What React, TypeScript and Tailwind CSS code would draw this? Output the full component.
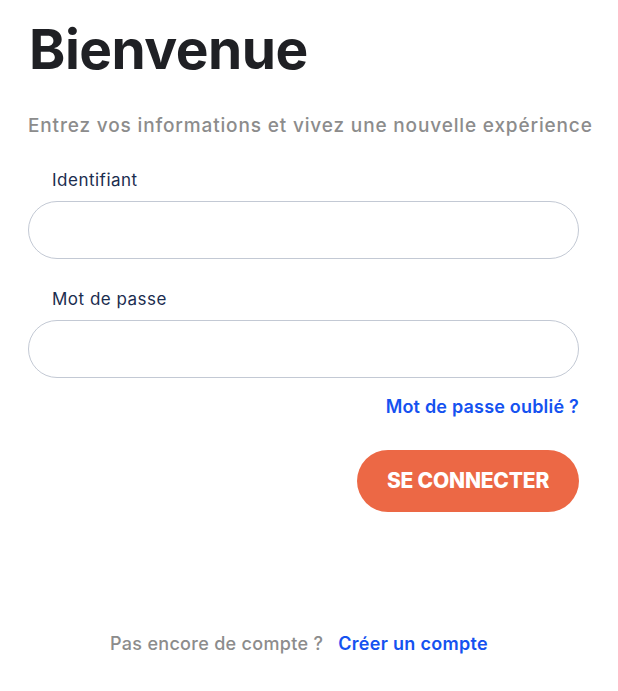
import React from "react";

export default function App() {
  return (
    <div className="min-h-[691px] w-[618px] bg-white" style={{ fontFamily: "Inter, 'Noto Sans', sans-serif" }}>
      <div className="w-[551px] ml-[28px] pt-[14px]">
        <h1 className="text-[55px] leading-[70px] font-bold text-[#1f2024] ml-[1px] tracking-[-0.5px]">Bienvenue</h1>
        <p className="mt-[30px] text-[19px] leading-[24px] text-[#8c8c8c] font-medium whitespace-nowrap tracking-[0.85px]">
          Entrez vos informations et vivez une nouvelle expérience
        </p>
        <label className="block mt-[31px] ml-[24px] text-[17px] leading-[22px] text-[#1b2d4f] tracking-[0.5px]">Identifiant</label>
        <div className="mt-[10px] h-[58px] rounded-full border border-[#c3c9d4] bg-white"></div>
        <label className="block mt-[29px] ml-[24px] text-[17px] leading-[22px] text-[#1b2d4f] tracking-[0.5px]">Mot de passe</label>
        <div className="mt-[10px] h-[58px] rounded-full border border-[#c3c9d4] bg-white"></div>
        <div className="flex justify-end mt-[18px]">
          <a className="text-[18px] leading-[22px] font-semibold text-[#1552f0] tracking-[0.2px]">Mot de passe oublié ?</a>
        </div>
        <div className="flex justify-end mt-[32px]">
          <button className="h-[62px] w-[222px] rounded-full bg-[#ec6845] text-white text-[21px] font-extrabold tracking-[-0.2px]">
            SE CONNECTER
          </button>
        </div>
        <div className="flex justify-center gap-[15px] mt-[121px] pr-[9px] text-[18px] leading-[22px] font-medium tracking-[0.3px]">
          <span className="text-[#8c8c8c]">Pas encore de compte ?</span>
          <a className="text-[#1552f0] font-semibold">Créer un compte</a>
        </div>
      </div>
    </div>
  );
}
